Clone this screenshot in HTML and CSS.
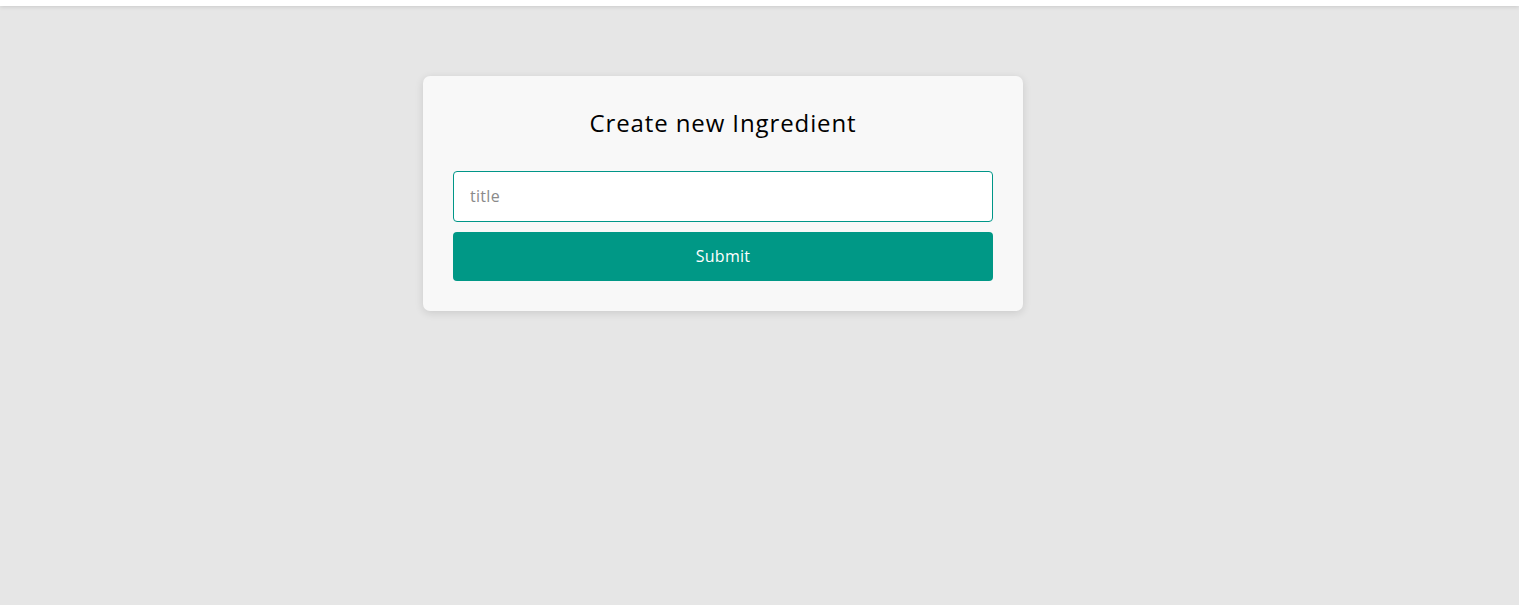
FILE: index.html
```html
<!DOCTYPE html>
<html lang="en">
<head>
<meta charset="utf-8">
<title>Create new Ingredient</title>
<link rel="stylesheet" href="styles.css">
</head>
<body>
<header class="topbar"></header>
<main class="page">
  <form class="card">
    <h1 class="card-title">Create new Ingredient</h1>
    <input class="field" type="text" placeholder="title" autofocus>
    <button class="submit" type="button">Submit</button>
  </form>
</main>
</body>
</html>
```

FILE: styles.css
```css
html, body {
  margin: 0;
  padding: 0;
}
body {
  background: #e6e6e6;
  font-family: "Open Sans", "Noto Sans", sans-serif;
  min-height: 605px;
}
.topbar {
  height: 6px;
  background: #ffffff;
  box-shadow: 0 1px 4px rgba(0, 0, 0, 0.12);
  position: relative;
}
.page {
  padding: 70px 0 0 423px;
}
.card {
  width: 600px;
  box-sizing: border-box;
  background: #f8f8f8;
  border-radius: 7px;
  padding: 30px;
  box-shadow: 0 2px 8px rgba(0, 0, 0, 0.12);
  display: flex;
  flex-direction: column;
}
.card-title {
  margin: 0 0 32px;
  font-size: 24px;
  font-weight: 400;
  line-height: 33px;
  letter-spacing: 0.9px;
  text-align: center;
  color: #000;
}
.field {
  height: 51px;
  box-sizing: border-box;
  border: 1px solid #009688;
  border-radius: 4px;
  background: #fff;
  padding: 0 16px 2px;
  font-family: inherit;
  font-size: 16px;
  letter-spacing: 0.3px;
  color: #000;
  outline: none;
  margin: 0 0 10px;
}
.field::placeholder {
  color: #8a8a8a;
}
.submit {
  height: 49px;
  border: none;
  border-radius: 4px;
  background: #009886;
  color: #fff;
  font-family: inherit;
  font-size: 16px;
  letter-spacing: 0.3px;
  padding-bottom: 2px;
  cursor: pointer;
}
```
